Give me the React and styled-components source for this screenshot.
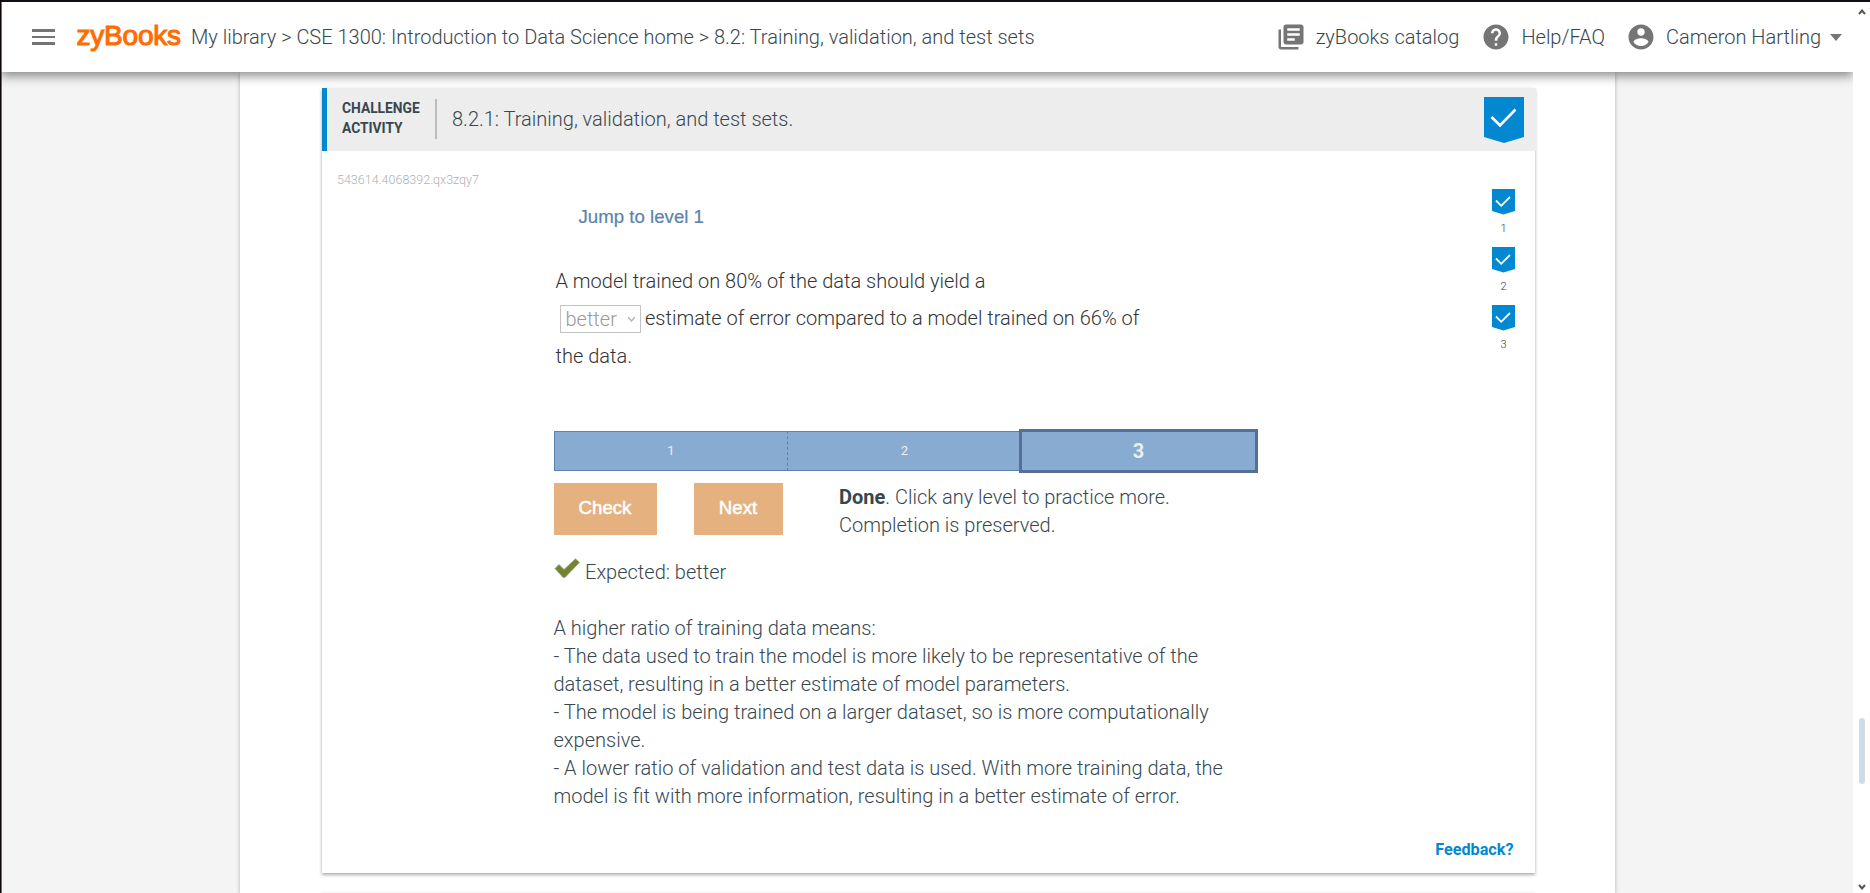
import React from "react";
import styled, { createGlobalStyle } from "styled-components";

const Global = createGlobalStyle`
  * { box-sizing: border-box; }
  body { margin: 0; background: #f4f4f4; font-family: Roboto, "Liberation Sans", sans-serif; font-weight: 300; font-size: 20px; line-height: 28px; color: #37474f; overflow: hidden; }
`;
const Frame = styled.div`
  width: 1870px; height: 893px; display: flex; flex-direction: column; overflow: hidden;
  border-top: 2px solid #120c14; border-left: 1px solid #0b0508;
`;
const TopBar = styled.header`
  flex: none; height: 70px; display: flex; align-items: center; background: #fff;
  border-left: 1px solid #b0506c; padding: 0 11px 0 26px; position: relative; z-index: 2;
  margin-right: 17px; box-shadow: 0 4px 10px rgba(0,0,0,.45);
  clip-path: inset(0 0 -24px 0);
`;
const Burger = styled.div`
  width: 31px; height: 30px; display: flex; flex-direction: column; justify-content: center; gap: 4px; padding: 0 4px;
`;
const BurgerLine = styled.i`height: 2.6px; background: #757575;`;
const Logo = styled.b`
  margin-left: 17.5px; width: 106.5px; font: 400 28px/30px "Liberation Sans", sans-serif; color: #ff6d00; letter-spacing: -.2px;
  -webkit-text-stroke: 1.1px #ff6d00; white-space: nowrap; position: relative; top: -1px;
`;
const Crumbs = styled.nav`margin-left: 8px; flex: 1; white-space: nowrap;`;
const MenuItem = styled.div`
  display: flex; align-items: center; white-space: nowrap; margin-left: ${p => p.$gap || 0}px;
  svg { margin-right: ${p => p.$pad || 10}px; fill: #757575; }
`;
const Caret = styled.i`
  margin-left: 9px; border: 6.5px solid transparent; border-top: 7px solid #757575; border-bottom: 0;
`;
const Main = styled.div`flex: 1; min-height: 0; display: flex; border-left: 1px solid #b0506c;`;
const Scroller = styled.div`flex: 1; display: flex; justify-content: flex-start; padding-left: 238px; overflow: hidden; background: #f4f4f4;`;
const Page = styled.main`
  width: 1375px; background: #fff; box-shadow: 0 1px 4px rgba(0,0,0,.28); padding: 16px 80px 0 82px;
`;
const Card = styled.section`
  height: 785px; background: #fff; display: flex; flex-direction: column;
  box-shadow: 0 2px 3px rgba(0,0,0,.25), 0 1px 4px rgba(0,0,0,.12);
`;
const NextCard = styled(Card)`height: 40px; margin-top: 20px;`;
const CardHead = styled.div`
  height: 63px; flex: none; margin-right: -1px; background: #ededed; border-left: 5px solid #0288d1; display: flex; align-items: center; padding: 0 12px 0 15px;
`;
const Kind = styled.div`
  width: 95px; height: 40px; border-right: 2px solid #bdbdbd; font-weight: 700; font-size: 13.8px; line-height: 20px; margin: -1px 15px 0 0;
  span { display: block; margin-top: -1px; }
`;
const Title = styled.div`flex: 1; line-height: 28px; padding-bottom: 2px;`;
const CardBody = styled.div`flex: 1; display: flex; position: relative;`;
const Left = styled.div`width: 231.5px; padding: 20px 0 0 15px; font-size: 12.5px; line-height: 18px; color: #b0b0b0;`;
const Work = styled.div`width: 704px; padding-top: 52px;`;
const Jump = styled.a`display: block; margin-left: 25px; font: 400 18.66px/28px "Liberation Sans", sans-serif; color: #5b83ab; -webkit-text-stroke: .2px #5b83ab;`;
const Question = styled.p`
  margin: 32px 0 0 2px; width: 610px; line-height: 37.3px; color: #333;
`;
const Select = styled.span`
  display: inline-flex; align-items: center; justify-content: space-between; width: 81.5px; height: 28px; margin: 0 4px;
  border: 1px solid #c3c3c3; padding: 0 4px 0 5px; line-height: 26px; vertical-align: -1px; color: #9a9a9a;
`;
const Levels = styled.div`
  display: flex; align-items: center; height: 44px; margin-top: 54px;
`;
const Level = styled.div`
  height: ${p => (p.$active ? 44 : 40)}px; width: ${p => (p.$active ? 239 : p.$w)}px;
  border: ${p => (p.$active ? "3px solid #566f99" : "1px solid #5b83ab")};
  ${p => !p.$active && `border-right: ${p.$dash ? "1px dashed #5b83ab" : "0"};`}
  ${p => p.$noLeft && "border-left: 0;"}
  background: #87abd1; color: #eee; display: flex; align-items: center; justify-content: center;
  font-size: ${p => (p.$active ? 20 : 13)}px; font-weight: ${p => (p.$active ? 700 : 400)};
  padding-left: ${p => (p.$noLeft ? 3 : 1)}px;
`;
const Actions = styled.div`display: flex; margin-top: 10px; height: 56px;`;
const Button = styled.div`
  width: ${p => p.$w}px; height: 52px; background: #e5b17f; color: #fff; font: 400 18.66px/50px "Liberation Sans", sans-serif;
  -webkit-text-stroke: .5px #fff; text-align: center; margin-right: ${p => p.$gap}px;
`;
const Done = styled.div`width: 360px; b { font-weight: 700; }`;
const Expected = styled.div`display: flex; margin-top: 19px; height: 28px; svg { margin: 0 5.5px 0 0; }`;
const Explain = styled.p`margin: 28px 0 0; white-space: pre-line;`;
const Steps = styled.div`width: 24px; padding-top: 38px; display: flex; flex-direction: column; margin-left: auto; margin-right: 20px;`;
const Step = styled.div`
  height: 58px; display: flex; flex-direction: column; align-items: center; font-size: 11px; line-height: 14px; font-weight: 300;
  span { margin: 7px 0 0 1px; }
`;
const Feedback = styled.a`position: absolute; right: 21.5px; bottom: 13px; font-weight: 700; font-size: 16.2px; line-height: 20px; color: #0288d1;`;
const Rail = styled.aside`
  width: 17px; flex: none; background: #fff; display: flex; flex-direction: column; align-items: center;
`;
const Thumb = styled.i`width: 6px; height: 66px; border-radius: 3px; background: #d0dce5; margin: 646px 0 100px 1px;`;
const RailTop = styled.div`position: absolute; top: 2px; right: 0; width: 17px; height: 70px; background: #fff; text-align: center; line-height: 0; padding-top: 6px; z-index: 3;`;

const Flag = ({ w, h, big }) => (
  <svg width={w} height={h} viewBox={big ? "0 0 40 46" : "0 0 23 26"}>
    <path fill="#0288d1" d={big ? "M0 0H40V40L20 46L0 40Z" : "M0 0H23V22L11.5 25.4L0 22Z"} />
    <path fill="none" stroke="#fff" strokeWidth={big ? 2.6 : 1.8} d={big ? "M7.5 20L16 28.5L31.5 12.5" : "M4 11.5L9.2 16.8L18 8"} />
  </svg>
);
const Chevron = ({ up, w = 8, color = "#555", sw = 2 }) => (
  <svg width={w} height={w * 0.75} viewBox="0 0 8 6">
    <path fill="none" stroke={color} strokeWidth={sw} d={up ? "M1 5L4 1.5L7 5" : "M1 1L4 4.5L7 1"} />
  </svg>
);

export default function App() {
  return (
    <Frame>
      <Global />
      <TopBar>
        <Burger><BurgerLine /><BurgerLine /><BurgerLine /></Burger>
        <Logo>zyBooks</Logo>
        <Crumbs>My library &gt; CSE 1300: Introduction to Data Science home &gt; 8.2: Training, validation, and test sets</Crumbs>
        <MenuItem $pad={10}>
          <svg width="30" height="30" viewBox="0 0 24 24"><path d="M4 6H2v14c0 1.1.9 2 2 2h14v-2H4V6zm16-4H8c-1.1 0-2 .9-2 2v12c0 1.1.9 2 2 2h12c1.1 0 2-.9 2-2V4c0-1.1-.9-2-2-2zm-1 9H9V9h10v2zm-4 4H9v-2h6v2zm4-8H9V5h10v2z" /></svg>
          zyBooks catalog
        </MenuItem>
        <MenuItem $gap={22}>
          <svg width="30" height="30" viewBox="0 0 24 24"><path d="M12 2C6.48 2 2 6.48 2 12s4.48 10 10 10 10-4.48 10-10S17.52 2 12 2zm1 17h-2v-2h2v2zm2.07-7.75l-.9.92C13.45 12.9 13 13.5 13 15h-2v-.5c0-1.1.45-2.1 1.17-2.83l1.24-1.26c.37-.36.59-.86.59-1.41 0-1.1-.9-2-2-2s-2 .9-2 2H8c0-2.21 1.79-4 4-4s4 1.79 4 4c0 .88-.36 1.68-.93 2.25z" /></svg>
          Help/FAQ
        </MenuItem>
        <MenuItem $gap={21}>
          <svg width="30" height="30" viewBox="0 0 24 24"><path d="M12 2C6.48 2 2 6.48 2 12s4.48 10 10 10 10-4.48 10-10S17.52 2 12 2zm0 3c1.66 0 3 1.34 3 3s-1.34 3-3 3-3-1.34-3-3 1.34-3 3-3zm0 14.2c-2.5 0-4.71-1.28-6-3.22.03-1.99 4-3.08 6-3.08 1.99 0 5.97 1.09 6 3.08-1.29 1.94-3.5 3.22-6 3.22z" /></svg>
          Cameron Hartling<Caret />
        </MenuItem>
      </TopBar>
      <RailTop><Chevron up /></RailTop>
      <Main>
        <Scroller>
          <Page>
            <Card>
              <CardHead>
                <Kind><span>CHALLENGE<br />ACTIVITY</span></Kind>
                <Title>8.2.1: Training, validation, and test sets.</Title>
                <Flag w={40} h={46} big />
              </CardHead>
              <CardBody>
                <Left>543614.4068392.qx3zqy7</Left>
                <Work>
                  <Jump>Jump to level 1</Jump>
                  <Question>
                    A model trained on 80% of the data should yield a<br />
                    <Select>better <Chevron w={9} color="#b0b0b0" sw={1.2} /></Select>estimate of error compared to a model trained on 66% of<br />
                    the data.
                  </Question>
                  <Levels>
                    <Level $w={234} $dash>1</Level>
                    <Level $w={231} $noLeft>2</Level>
                    <Level $active>3</Level>
                  </Levels>
                  <Actions>
                    <Button $w={103} $gap={37}>Check</Button>
                    <Button $w={89} $gap={56.5}>Next</Button>
                    <Done><b>Done</b>. Click any level to practice more. Completion is preserved.</Done>
                  </Actions>
                  <Expected>
                    <svg width="26" height="22" viewBox="0 0 26 22"><path fill="#74832f" stroke="#94a6a8" strokeWidth=".8" d="M1 10.5L5 6.5L10 11.5L21.5 .8L25.5 4.5L11 19.5H9Z" /></svg>
                    Expected: better
                  </Expected>
                  <Explain>{`A higher ratio of training data means:
- The data used to train the model is more likely to be representative of the
dataset, resulting in a better estimate of model parameters.
- The model is being trained on a larger dataset, so is more computationally
expensive.
- A lower ratio of validation and test data is used. With more training data, the
model is fit with more information, resulting in a better estimate of error.`}</Explain>
                </Work>
                <Steps>
                  {[1, 2, 3].map(n => <Step key={n}><Flag w={23} h={26} /><span>{n}</span></Step>)}
                </Steps>
                <Feedback>Feedback?</Feedback>
              </CardBody>
            </Card>
            <NextCard />
          </Page>
        </Scroller>
        <Rail><Thumb /><Chevron /></Rail>
      </Main>
    </Frame>
  );
}
